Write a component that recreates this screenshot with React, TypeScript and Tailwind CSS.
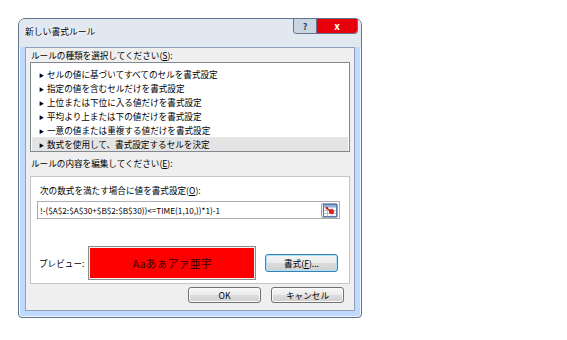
import React from "react";

const jp = "font-['Noto_Sans_CJK_JP','Liberation_Sans',sans-serif]";

const RULE_TYPES = [
	"セルの値に基づいてすべてのセルを書式設定",
	"指定の値を含むセルだけを書式設定",
	"上位または下位に入る値だけを書式設定",
	"平均より上または下の値だけを書式設定",
	"一意の値または重複する値だけを書式設定",
	"数式を使用して、書式設定するセルを決定",
];

// 数式は表示欄の幅で先頭が切れている
const FORMULA = "!-($A$2:$A$30+$B$2:$B$30))<=TIME(1,10,))*1)-1";

const WinButton = ({ children, focused = false, className = "" }: { children: React.ReactNode; focused?: boolean; className?: string }) => {
	return (
		<button
			className={
				"flex items-center justify-center rounded-[3px] border bg-[#e4e4e4] bg-[linear-gradient(#f6f6f6,#ebebeb_50%,#dddddd_51%,#cfcfcf)] text-[8.6px] leading-none text-black " +
				(focused ? "border-[#3c7fb1] shadow-[inset_0_0_0_1px_#a8e4fb]" : "border-[#707070] shadow-[inset_0_0_0_1px_#fbfbfb]") +
				" " +
				className
			}
		>
			{children}
		</button>
	);
};

// 範囲選択ボタンのアイコン
const CollapseIcon = () => (
	<svg width="14" height="13" viewBox="0 0 14 13">
		<rect x="0.5" y="0.5" width="13" height="12" fill="#ffffff" stroke="#5a78a8" />
		<rect x="1" y="1" width="12" height="2.5" fill="#8fb0dc" />
		<path d="M1 6.5H13M1 9.5H13M4.5 3.5V12.5M9 3.5V12.5" stroke="#9fb4d2" strokeWidth="0.8" />
		<circle cx="8.5" cy="7.5" r="2.6" fill="#e0241b" />
		<path d="M3 3.5L7.5 7" stroke="#c81810" strokeWidth="1.4" />
		<path d="M2.5 3L5.5 3.3L3 5.8Z" fill="#c81810" />
	</svg>
);

export default function App() {
	return (
		<div className={"w-[567px] h-[340px] bg-white overflow-hidden " + jp}>
			<div className="ml-[18px] mt-[18px] w-[344px] h-[300px] flex flex-col rounded-t-[7px] rounded-b-[4px] border border-slate-500 bg-blue-200 shadow-[inset_0_0_0_1px_#f2f7fc]">
				{/* タイトルバー */}
				<div className="h-[28px] flex flex-row justify-between items-start pl-[6px] pr-[3px] rounded-t-[6px] bg-slate-200">
					<p className="pt-[7px] text-[8.8px] leading-[12px] text-black [text-shadow:0_0_4px_#ffffff,0_0_2px_#ffffff]">新しい書式ルール</p>
					<div className="flex flex-row h-[15px] rounded-b-[4px] border border-t-0 border-slate-500 overflow-hidden">
						<div className="w-[23px] flex items-center justify-center bg-slate-300 border-r border-slate-500 text-[9px] font-bold leading-none text-slate-700">?</div>
						<div className="w-[40px] flex items-center justify-center bg-red-600 text-[10px] font-bold leading-none text-white">x</div>
					</div>
				</div>

				{/* クライアント領域 */}
				<div className="mx-[6px] h-[264px] flex flex-col border border-slate-400 bg-[#efefef] text-black">
					<p className="pt-[1px] pl-[5px] h-[13px] text-[8.6px] leading-[12px]">
						ルールの種類を選択してください(<span className="underline">S</span>):
					</p>

					<div className="mt-[1px] mx-[4px] h-[90px] flex flex-col pt-[4px] border border-[#828790] bg-white">
						{RULE_TYPES.map((item, i) => (
							<div
								key={item}
								className={"h-[14px] mx-[1px] flex flex-row items-center gap-[3px] pl-[7px] text-[8.6px] leading-[14px] " + (i === RULE_TYPES.length - 1 ? "bg-[#e4e4e4]" : "")}
							>
								<span className="text-[5px] leading-none">▶</span>
								<span>{item}</span>
							</div>
						))}
					</div>

					<p className="mt-[5px] pl-[5px] h-[12px] text-[8.6px] leading-[12px]">
						ルールの内容を編集してください(<span className="underline">E</span>):
					</p>

					<div className="mt-[7px] mx-[4px] h-[108px] flex flex-col border border-[#c4c4c4] bg-white">
						<p className="pt-[7px] pl-[9px] h-[19px] text-[8.6px] leading-[12px]">
							次の数式を満たす場合に値を書式設定(<span className="underline">O</span>):
						</p>

						<div className="mt-[5px] ml-[6px] w-[303px] h-[18px] flex flex-row items-center justify-between pl-[2px] pr-[1px] border border-[#abadb3] bg-white">
							<span className="text-[8.2px] leading-none whitespace-nowrap">{FORMULA}</span>
							<div className="w-[17px] h-[15px] flex items-center justify-center rounded-[2px] border border-[#9aa6b6] bg-[#e8ecf1]">
								<CollapseIcon />
							</div>
						</div>

						<div className="mt-[27px] flex flex-row items-center pl-[8px]">
							<p className="w-[49px] text-[8.6px] leading-[12px]">プレビュー:</p>
							<div className="w-[168px] h-[34px] flex items-center justify-center border border-[#8c8c8c] bg-[#ff0000] shadow-[inset_0_0_0_1px_#f4f4f4]">
								<span className="text-[11px] leading-none text-[#3a0000]">Aaあぁアァ亜宇</span>
							</div>
							<WinButton focused className="ml-[9px] w-[73px] h-[18px]">
								書式(<span className="underline">F</span>)...
							</WinButton>
						</div>
					</div>

					<div className="mt-[3px] flex flex-row justify-end gap-[10px] pr-[10px]">
						<WinButton className="w-[73px] h-[16px]">OK</WinButton>
						<WinButton className="w-[73px] h-[16px]">キャンセル</WinButton>
					</div>
				</div>
			</div>
		</div>
	);
}
